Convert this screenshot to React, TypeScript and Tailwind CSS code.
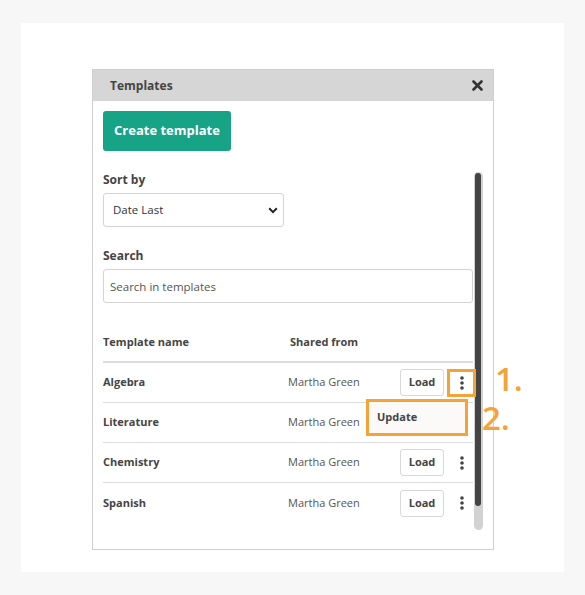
import { Fragment } from 'react'

const templates = [
  { name: 'Algebra', owner: 'Martha Green', active: true },
  { name: 'Literature', owner: 'Martha Green', hidden: true },
  { name: 'Chemistry', owner: 'Martha Green' },
  { name: 'Spanish', owner: 'Martha Green' },
]

function Kebab() {
  return (
    <svg width="4" height="14" viewBox="0 0 4 14" className="fill-[#444]">
      <circle cx="2" cy="2" r="1.8" />
      <circle cx="2" cy="7" r="1.8" />
      <circle cx="2" cy="12" r="1.8" />
    </svg>
  )
}

export default function App() {
  return (
    <div
      className="h-[595px] w-[585px] bg-[#f7f7f7] pl-[21px] pt-[23px] text-[#444]"
      style={{ fontFamily: '"Open Sans", "Liberation Sans", sans-serif' }}
    >
      <div className="relative h-[549px] w-[543px] bg-white pl-[71px] pt-[46px]">
        <div className="flex h-[481px] w-[402px] flex-col border border-[#cfcfcf] bg-white">
          <div className="flex h-[31px] shrink-0 items-center justify-between bg-[#d6d6d6] pl-[17px] pr-[10px]">
            <span className="text-[12px] font-bold text-[#444]">Templates</span>
            <svg width="11" height="11" viewBox="0 0 11 11" className="stroke-[#333]">
              <path d="M1.5 1.5l8 8M9.5 1.5l-8 8" strokeWidth="2.6" strokeLinecap="round" />
            </svg>
          </div>

          <div className="flex flex-1 flex-col pl-[10px] pr-[10px]">
            <button className="mt-[10px] h-[40px] w-[128px] rounded-[3px] bg-[#17a385] text-[13px] font-bold text-white">
              Create template
            </button>

            <div className="mt-[21px] flex flex-1 pb-[19px]">
              <div className="flex flex-1 flex-col">
                <label className="text-[12px] leading-[16px] font-bold">Sort by</label>
                <div className="relative mt-[5px] h-[34px] w-[181px]">
                  <select className="h-full w-full appearance-none rounded-[3px] border border-[#d4d4d4] bg-white pl-[9px] text-[11.5px] text-[#333]">
                    <option>Date Last</option>
                  </select>
                  <svg
                    width="10"
                    height="7"
                    viewBox="0 0 10 7"
                    className="pointer-events-none absolute top-[14px] right-[6px] stroke-[#222]"
                  >
                    <path d="M1.2 1.3l3.8 3.8 3.8-3.8" strokeWidth="2" fill="none" />
                  </svg>
                </div>

                <label className="mt-[21px] text-[12px] leading-[16px] font-bold">Search</label>
                <input
                  className="mt-[5px] h-[34px] w-[370px] rounded-[3px] border border-[#d4d4d4] pl-[6px] text-[11.5px] placeholder:text-[#555]"
                  placeholder="Search in templates"
                />

                <div className="mt-[25px] flex h-[35px] w-[370px] items-center border-b-2 border-[#dcdcdc] pb-[4px] text-[11px] font-bold">
                  <span className="w-[187px]">Template name</span>
                  <span>Shared from</span>
                </div>

                {templates.map((t, i) => (
                  <Fragment key={t.name}>
                    <div
                      className={
                        'relative flex h-[40px] w-[370px] items-center text-[11px] ' +
                        (i < templates.length - 1 ? 'border-b border-[#dcdcdc]' : '')
                      }
                    >
                      <span className="w-[185px] shrink-0 font-bold">{t.name}</span>
                      <span className="w-[112px] shrink-0 text-[#555]">{t.owner}</span>
                      {!t.hidden && (
                        <>
                          <button className="h-[27px] w-[44px] shrink-0 rounded-[3px] border border-[#d8d8d8] bg-white font-bold">
                            Load
                          </button>
                          <div
                            className={
                              'ml-[3px] flex h-[28px] w-[29px] shrink-0 items-center justify-center ' +
                              (t.active ? 'border-[3px] border-[#f4a336]' : '')
                            }
                          >
                            <Kebab />
                          </div>
                        </>
                      )}
                      {t.active && (
                        <div className="absolute top-[36px] left-[263px] z-10 flex h-[37px] w-[102px] items-center border-[3px] border-[#f4a336] bg-[#fcf9f9] pl-[8px] font-bold">
                          Update
                        </div>
                      )}
                    </div>
                  </Fragment>
                ))}
              </div>

              <div className="flex w-[10px] flex-col items-center">
                <div className="w-[9px] flex-1 rounded-full bg-[#d2d2d2] px-[1.5px] pt-[1px]">
                  <div className="h-[333px] w-[6px] rounded-full bg-[#444]" />
                </div>
              </div>
            </div>
          </div>
        </div>

        <span className="absolute top-[339px] left-[474px] text-[33px] leading-none font-semibold text-[#f4a336]">
          1.
        </span>
        <span className="absolute top-[378px] left-[461px] text-[33px] leading-none font-semibold text-[#f4a336]">
          2.
        </span>
      </div>
    </div>
  )
}
